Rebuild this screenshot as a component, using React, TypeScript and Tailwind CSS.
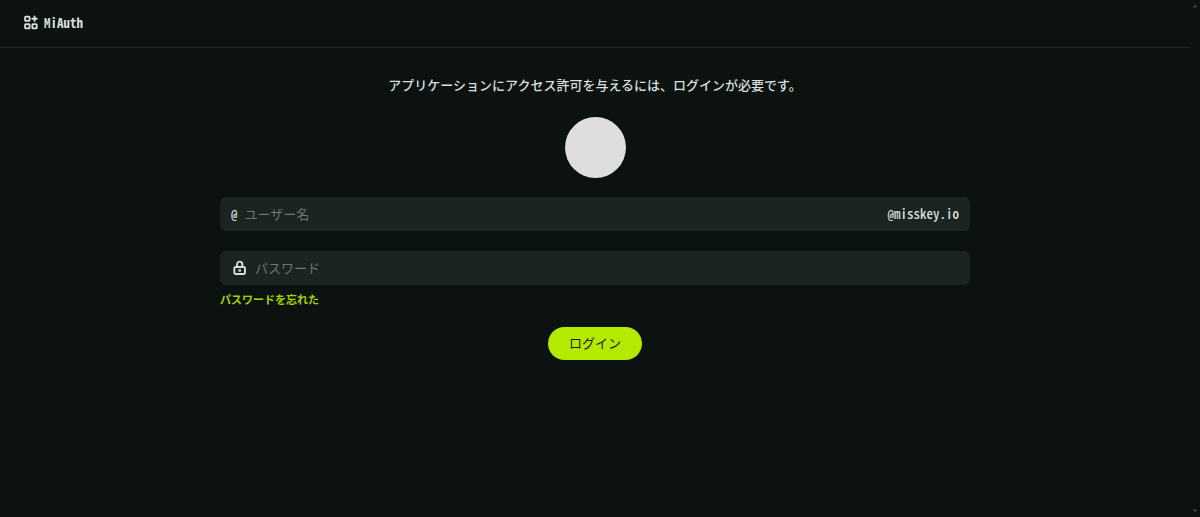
import React from "react";

function AppsIcon() {
  return (
    <svg
      viewBox="0 0 24 24"
      className="size-4"
      fill="none"
      stroke="currentColor"
      strokeWidth="2.8"
      strokeLinecap="round"
      strokeLinejoin="round"
      aria-hidden="true"
    >
      <rect x="3.2" y="2.4" width="6.6" height="6.4" rx="1" />
      <rect x="3.2" y="13.6" width="6.6" height="6.4" rx="1" />
      <rect x="14" y="13.6" width="6.6" height="6.4" rx="1" />
      <path d="M13.8 5.6h7M17.3 2.1v7" />
    </svg>
  );
}

function LockIcon() {
  return (
    <svg
      viewBox="0 0 24 24"
      className="size-4 shrink-0"
      fill="none"
      stroke="currentColor"
      strokeWidth="2.8"
      strokeLinecap="round"
      strokeLinejoin="round"
      aria-hidden="true"
    >
      <rect x="3.5" y="10.5" width="16" height="10.5" rx="2" />
      <circle cx="11.5" cy="15.7" r="0.8" />
      <path d="M7.5 10.5V6.5a4 4 0 0 1 8 0v4" />
    </svg>
  );
}

function Scrollbar() {
  return (
    <div className="flex w-[10px] shrink-0 flex-col items-center justify-between py-1 text-[#3c4341]" aria-hidden="true">
      <svg viewBox="0 0 6 4" className="h-1 w-[6px]" fill="currentColor">
        <path d="M3 0.5L5.5 3.5H0.5z" />
      </svg>
      <svg viewBox="0 0 6 4" className="h-1 w-[6px]" fill="currentColor">
        <path d="M3 3.5L0.5 0.5H5.5z" />
      </svg>
    </div>
  );
}

export default function App() {
  return (
    <div className="flex min-h-screen bg-[#0c1210] font-['Noto_Sans_CJK_JP',sans-serif] text-[13px] leading-5 text-[#d6dfdc] [font-feature-settings:'hwid']">
      <div className="flex min-w-0 grow flex-col">
        <header className="flex h-12 items-center gap-[5px] border-b border-[#222826] px-[23px] pb-px">
          <AppsIcon />
          <h1 className="font-bold">MiAuth</h1>
        </header>
        <main className="px-6 pt-[27px]">
          <form className="mx-auto flex max-w-[750px] flex-col items-center" onSubmit={(e) => e.preventDefault()}>
            <p className="text-center font-medium">
              アプリケーションにアクセス許可を与えるには、ログインが必要です。
            </p>
            <div className="mt-[22px] size-[61px] rounded-full bg-[#dedede]" />
            <label className="mt-[19px] flex h-[34px] w-full items-center gap-[7px] rounded-md bg-[#1b2421] px-[11px]">
              <span className="font-medium">@</span>
              <input
                type="text"
                aria-label="ユーザー名"
                placeholder="ユーザー名"
                className="min-w-0 grow bg-transparent outline-none placeholder:text-[#707472]"
              />
              <span className="font-medium">@misskey.io</span>
            </label>
            <label className="mt-5 flex h-[34px] w-full items-center gap-[7px] rounded-md bg-[#1b2421] px-3">
              <LockIcon />
              <input
                type="password"
                aria-label="パスワード"
                placeholder="パスワード"
                className="min-w-0 grow bg-transparent outline-none placeholder:text-[#707472]"
              />
            </label>
            <a href="#forgot" className="mt-1 self-start text-[11px] font-bold text-[#a3d300]">
              パスワードを忘れた
            </a>
            <button
              type="submit"
              className="mt-[18px] h-[33px] rounded-full bg-[#b4e900] px-[21px] pb-0.5 text-[#192320]"
            >
              ログイン
            </button>
          </form>
        </main>
      </div>
      <Scrollbar />
    </div>
  );
}
